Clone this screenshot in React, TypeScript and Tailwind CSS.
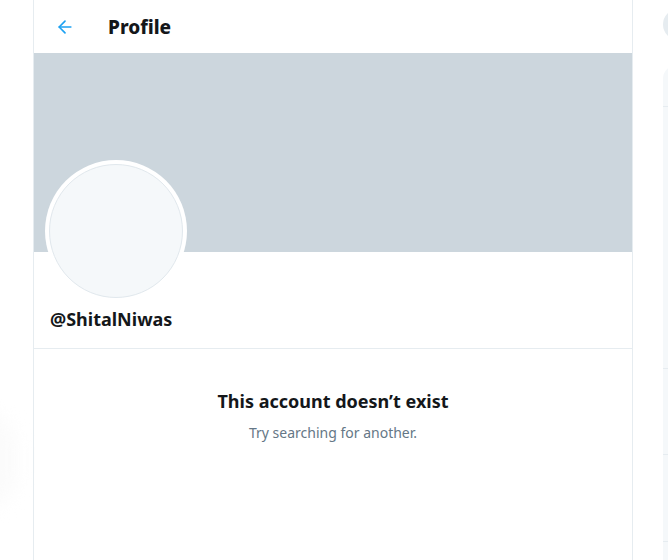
import { ArrowLeft } from 'lucide-react'

export default function App() {
  return (
    <div className="relative h-[560px] w-[668px] overflow-hidden bg-white" style={{ fontFamily: '"Noto Sans", "Open Sans", sans-serif' }}>
      <div className="absolute left-[-55px] top-[410px] h-[100px] w-[72px] rounded-full bg-[#fbfbfb] blur-[8px]" />
      <div className="flex h-full">
        <div className="w-[33px] shrink-0" />
        <main className="flex h-full w-[600px] shrink-0 flex-col border-x border-[#e6ecf0]">
          <header className="flex h-[53px] items-center pt-[2px]">
            <ArrowLeft className="ml-[21px] -mt-[2px] h-[20px] w-[20px] text-[#1da1f2]" strokeWidth={2} />
            <h1 className="ml-[33px] text-[19px] font-extrabold leading-none text-[#14171a]">Profile</h1>
          </header>
          <div className="h-[199px] bg-[#ccd6dd]" />
          <div className="px-[11px]">
            <div className="relative -mt-[92px] h-[142px] w-[142px] rounded-full bg-white p-[4px]">
              <div className="h-full w-full rounded-full border border-[#e1e8ed] bg-[#f5f8fa]" />
            </div>
            <div className="mt-[4px] pl-[5px] text-[18px] font-bold leading-[26px] text-[#14171a]">@ShitalNiwas</div>
          </div>
          <div className="mt-[16px] border-b border-[#e6ecf0]" />
          <div className="flex flex-col items-center pt-[39px]">
            <h2 className="text-[18px] font-bold leading-[26px] text-[#14171a]">This account doesn’t exist</h2>
            <p className="mt-[9px] text-[14px] leading-[20px] text-[#657786]">Try searching for another.</p>
          </div>
        </main>
        <aside className="ml-[30px] flex w-[300px] shrink-0 flex-col">
          <div className="mt-[9px] h-[31px] rounded-full bg-[#e6ecf0]" />
          <div className="mt-[25px] flex-1 rounded-t-[14px] bg-[#f5f8fa]">
            <div className="h-[42px] border-b border-[#e6ecf0]" />
            <div className="h-[261px]" />
            <div className="h-[87px] border-y border-[#e6ecf0]" />
            <div className="h-[87px] border-b border-[#e6ecf0]" />
          </div>
        </aside>
      </div>
    </div>
  )
}
